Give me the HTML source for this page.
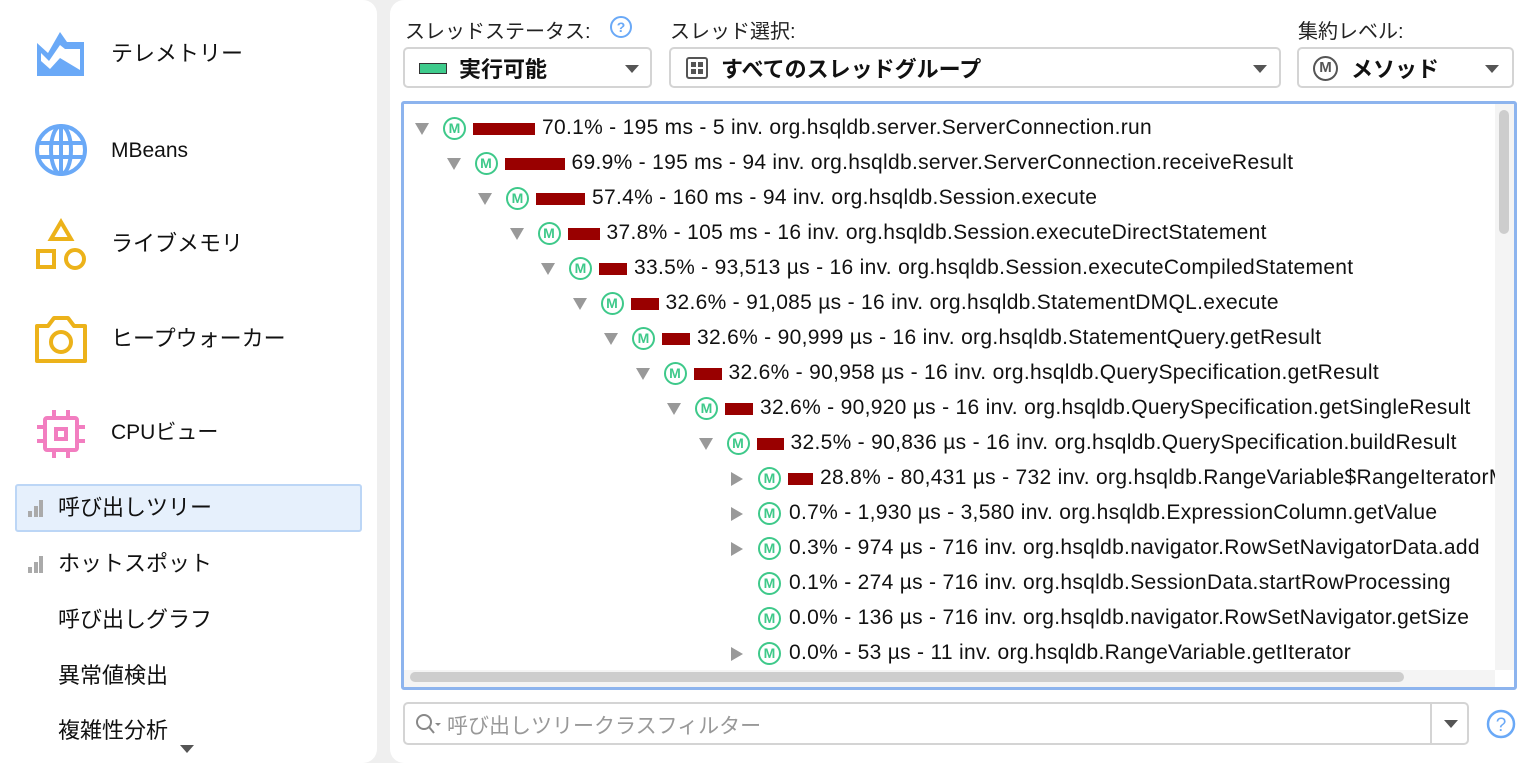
<!DOCTYPE html>
<html><head><meta charset="utf-8"><style>
*{margin:0;padding:0;box-sizing:border-box}
body{width:1526px;height:763px;background:#efefef;font-family:"Liberation Sans","Noto Sans CJK JP",sans-serif;color:#111;position:relative;overflow:hidden}
.abs{position:absolute}
.left{left:0;top:0;width:377px;height:763px;background:#fff;border-radius:0 14px 14px 0}
.right{left:390px;top:0;width:1136px;height:763px;background:#fff;border-radius:14px 0 0 14px}
.nav{position:absolute;left:111px;font-size:22px;line-height:24px}
.lab{position:absolute;font-size:20px;color:#222;top:15px}
.combo{position:absolute;top:47px;height:41px;border:2px solid #d4d4d4;border-radius:5px;background:#fff;font-size:22px}
.arr{position:absolute;width:0;height:0;border-left:7px solid transparent;border-right:7px solid transparent;border-top:8px solid #555}
.tree{left:401px;top:101px;width:1116px;height:589px;border:3px solid #8db4ee;border-radius:3px;background:#fff;overflow:hidden}
.row{position:absolute;height:35px;font-size:21px;letter-spacing:0.3px;line-height:35px;white-space:nowrap}
.tri{position:absolute;top:12px;width:0;height:0}
.td{border-left:7px solid transparent;border-right:7px solid transparent;border-top:12px solid #999;left:-1px}
.tr{border-top:7px solid transparent;border-bottom:7px solid transparent;border-left:12px solid #999;top:11px;left:0}
.m{position:absolute;top:6px;width:23px;height:23px;border:2px solid #3ec98a;border-radius:50%;color:#3ec98a;font-size:14px;font-weight:bold;line-height:19px;text-align:center;letter-spacing:0}
.bar{position:absolute;top:12px;height:12px;background:#990000}
.t{position:absolute;top:-1px}
</style></head><body>
<div class="abs left"></div>
<div class="abs right"></div>

<svg class="abs" style="left:36px;top:31px" width="50" height="46" viewBox="0 0 50 46"><path d="M1 12 L12 22 L24 1 L31 11 L48 11 L48 45 L1 45 Z" fill="#6aa9f7"/><path d="M5 22 L13 30 L24 14 L29 18 L44 18 L44 39 L24 27 L14 38 L5 30 Z" fill="#fff"/></svg>
<svg class="abs" style="left:34px;top:123px" width="54" height="54" viewBox="0 0 54 54" fill="none" stroke="#6aa9f7" stroke-width="4"><circle cx="27" cy="27" r="24"/><ellipse cx="27" cy="27" rx="10" ry="24"/><line x1="3" y1="20" x2="51" y2="20"/><line x1="3" y1="34" x2="51" y2="34"/><line x1="27" y1="3" x2="27" y2="51"/></svg>
<svg class="abs" style="left:36px;top:218px" width="52" height="52" viewBox="0 0 52 52" fill="none" stroke="#ecb21a" stroke-width="4"><path d="M25 4 L35 21 L15 21 Z"/><rect x="2" y="33" width="16" height="16"/><circle cx="39" cy="41" r="9"/></svg>
<svg class="abs" style="left:34px;top:314px" width="54" height="50" viewBox="0 0 54 50" fill="none" stroke="#ecb21a" stroke-width="4"><path d="M3 12 L14 12 L20 4 L34 4 L40 12 L51 12 L51 47 L3 47 Z" stroke-linejoin="round"/><circle cx="27" cy="28" r="10"/></svg>
<svg class="abs" style="left:36px;top:409px" width="50" height="50" viewBox="0 0 50 50" fill="none" stroke="#f27ec0" stroke-width="4"><rect x="9" y="9" width="32" height="32" rx="2"/><rect x="20" y="20" width="10" height="10"/><path d="M18 1v8M32 1v8M18 41v8M32 41v8M1 18h8M1 32h8M41 18h8M41 32h8"/></svg>
<div class="nav" style="top:42px">テレメトリー</div>
<div class="nav" style="top:139px;font-size:21px">MBeans</div>
<div class="nav" style="top:232px">ライブメモリ</div>
<div class="nav" style="top:327px">ヒープウォーカー</div>
<div class="nav" style="top:421px;font-size:21px">CPUビュー</div>
<div class="abs" style="left:15px;top:484px;width:347px;height:48px;background:#e6f0fc;border:2px solid #bcd6f6;border-radius:3px"></div>
<svg class="abs" style="left:28px;top:498px" width="16" height="20"><rect x="0" y="13" width="4" height="6" fill="#aaa"/><rect x="6" y="8" width="4" height="11" fill="#aaa"/><rect x="11" y="2" width="4" height="17" fill="#aaa"/></svg>
<svg class="abs" style="left:28px;top:554px" width="16" height="20"><rect x="0" y="13" width="4" height="6" fill="#aaa"/><rect x="6" y="8" width="4" height="11" fill="#aaa"/><rect x="11" y="2" width="4" height="17" fill="#aaa"/></svg>
<div class="nav" style="left:58px;top:496px">呼び出しツリー</div>
<div class="nav" style="left:58px;top:552px">ホットスポット</div>
<div class="nav" style="left:58px;top:608px">呼び出しグラフ</div>
<div class="nav" style="left:58px;top:664px">異常値検出</div>
<div class="nav" style="left:58px;top:719px">複雑性分析</div>
<div class="arr" style="left:180px;top:745px"></div>

<div class="lab" style="left:405px">スレッドステータス:</div>
<svg class="abs" style="left:609px;top:15px" width="24" height="24"><circle cx="12" cy="12" r="10" fill="none" stroke="#6aa9f7" stroke-width="2"/><text x="12" y="17" text-anchor="middle" font-size="14" font-weight="bold" fill="#6aa9f7" font-family="Liberation Sans">?</text></svg>
<div class="lab" style="left:670px">スレッド選択:</div>
<div class="lab" style="left:1298px">集約レベル:</div>

<div class="combo" style="left:403px;width:249px">
 <div class="abs" style="left:14px;top:14px;width:28px;height:11px;background:#3ecb8c;border:1px solid #333"></div>
 <div class="abs" style="left:54px;top:3px;font-weight:bold">実行可能</div>
 <div class="arr" style="left:220px;top:16px"></div>
</div>
<div class="combo" style="left:669px;width:612px">
 <svg class="abs" style="left:15px;top:8px" width="22" height="22"><rect x="1" y="1" width="20" height="20" rx="2" fill="none" stroke="#555" stroke-width="2"/><rect x="5" y="5" width="5" height="5" fill="#555"/><rect x="12" y="5" width="5" height="5" fill="#555"/><rect x="5" y="12" width="5" height="5" fill="#555"/><rect x="12" y="12" width="5" height="5" fill="#555"/></svg>
 <div class="abs" style="left:50px;top:3px;font-weight:bold">すべてのスレッドグループ</div>
 <div class="arr" style="left:582px;top:16px"></div>
</div>
<div class="combo" style="left:1297px;width:217px">
 <div class="abs" style="left:14px;top:7px;width:25px;height:25px;border:2.5px solid #555;border-radius:50%;color:#555;font-size:15px;font-weight:bold;text-align:center;line-height:20px">M</div>
 <div class="abs" style="left:52px;top:3px;font-weight:bold">メソッド</div>
 <div class="arr" style="left:186px;top:16px"></div>
</div>

<div class="abs tree">
<div id="rows"></div>
<div class="abs" style="left:1091px;top:0;width:19px;height:566px;background:#f4f4f4"></div>
<div class="abs" style="left:1095px;top:6px;width:10px;height:124px;background:#cdcdcd;border-radius:5px"></div>
<div class="abs" style="left:0;top:566px;width:1091px;height:17px;background:#f4f4f4"></div>
<div class="abs" style="left:6px;top:568px;width:994px;height:10px;background:#cdcdcd;border-radius:5px"></div>
</div>

<div class="abs" style="left:403px;top:702px;width:1066px;height:43px;border:2px solid #d4d4d4;border-radius:5px">
 <svg class="abs" style="left:10px;top:9px" width="28" height="24" fill="none" stroke="#888" stroke-width="2"><circle cx="9" cy="9" r="7"/><line x1="14" y1="14" x2="19" y2="20"/><path d="M20 10 l3 3 l3 -3z" fill="#888" stroke="none"/></svg>
 <div class="abs" style="left:42px;top:6px;font-size:21px;color:#999">呼び出しツリークラスフィルター</div>
 <div class="abs" style="left:1025px;top:0;width:2px;height:39px;background:#d4d4d4"></div>
 <div class="arr" style="left:1039px;top:16px"></div>
</div>
<svg class="abs" style="left:1486px;top:709px" width="30" height="30"><circle cx="15" cy="15" r="13" fill="none" stroke="#6aa9f7" stroke-width="2.5"/><text x="15" y="22" text-anchor="middle" font-size="19" fill="#6aa9f7" font-family="Liberation Sans">?</text></svg>

<script>
var rows=[
[0,'d',62,'70.1% - 195 ms - 5 inv. org.hsqldb.server.ServerConnection.run'],
[1,'d',60,'69.9% - 195 ms - 94 inv. org.hsqldb.server.ServerConnection.receiveResult'],
[2,'d',49,'57.4% - 160 ms - 94 inv. org.hsqldb.Session.execute'],
[3,'d',32,'37.8% - 105 ms - 16 inv. org.hsqldb.Session.executeDirectStatement'],
[4,'d',28,'33.5% - 93,513 µs - 16 inv. org.hsqldb.Session.executeCompiledStatement'],
[5,'d',28,'32.6% - 91,085 µs - 16 inv. org.hsqldb.StatementDMQL.execute'],
[6,'d',28,'32.6% - 90,999 µs - 16 inv. org.hsqldb.StatementQuery.getResult'],
[7,'d',28,'32.6% - 90,958 µs - 16 inv. org.hsqldb.QuerySpecification.getResult'],
[8,'d',28,'32.6% - 90,920 µs - 16 inv. org.hsqldb.QuerySpecification.getSingleResult'],
[9,'d',27,'32.5% - 90,836 µs - 16 inv. org.hsqldb.QuerySpecification.buildResult'],
[10,'r',25,'28.8% - 80,431 µs - 732 inv. org.hsqldb.RangeVariable$RangeIteratorMain.next'],
[10,'r',0,'0.7% - 1,930 µs - 3,580 inv. org.hsqldb.ExpressionColumn.getValue'],
[10,'r',0,'0.3% - 974 µs - 716 inv. org.hsqldb.navigator.RowSetNavigatorData.add'],
[10,'',0,'0.1% - 274 µs - 716 inv. org.hsqldb.SessionData.startRowProcessing'],
[10,'',0,'0.0% - 136 µs - 716 inv. org.hsqldb.navigator.RowSetNavigator.getSize'],
[10,'r',0,'0.0% - 53 µs - 11 inv. org.hsqldb.RangeVariable.getIterator']];
var h='';
rows.forEach(function(r,i){
 var x=12+r[0]*31.5, y=7+i*35;
 h+='<div class="row" style="left:'+x+'px;top:'+y+'px;width:1200px">';
 if(r[1]) h+='<div class="tri '+(r[1]=='d'?'td':'tr')+'"></div>';
 h+='<div class="m" style="left:27px">M</div>';
 var tx;
 if(r[2]){h+='<div class="bar" style="left:57px;width:'+r[2]+'px"></div>';tx=57+r[2]+7;}
 else tx=58;
 h+='<div class="t" style="left:'+tx+'px">'+r[3]+'</div></div>';
});
document.getElementById('rows').innerHTML=h;
</script>
</body></html>
